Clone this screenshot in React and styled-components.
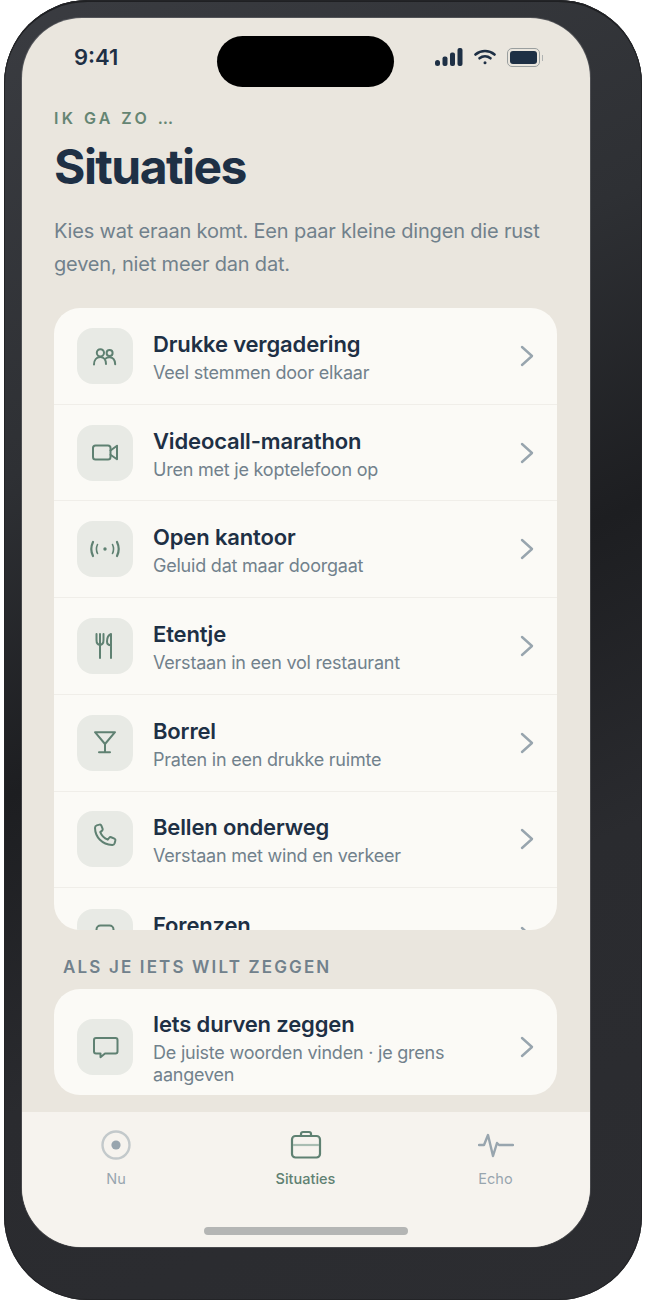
import styled, { createGlobalStyle } from "styled-components";

const GlobalStyle = createGlobalStyle`
  html, body {
    margin: 0;
    padding: 0;
    background: #fff;
    font-family: Inter, "Noto Sans", sans-serif;
  }
  * {
    box-sizing: border-box;
  }
`;

// icons are drawn 1:1 on the 56px tile
const Glyph = ({ width = 2, children }) => (
  <svg
    width="56"
    height="56"
    viewBox="0 0 56 56"
    fill="none"
    stroke="currentColor"
    strokeWidth={width}
    strokeLinecap="round"
    strokeLinejoin="round"
  >
    {children}
  </svg>
);

const PeopleIcon = () => (
  <Glyph>
    <circle cx="23.4" cy="24.8" r="3.6" />
    <circle cx="32.6" cy="25" r="3" />
    <path d="M17 36.5c0-4.4 2.6-7.5 6.3-7.5 3.4 0 5.7 2.8 5.7 7" />
    <path d="M28.4 30.7c1.2-1 2.8-1.5 4.4-1.4 3.2.2 5.2 3 5.4 6.9" />
  </Glyph>
);

const VideoIcon = () => (
  <Glyph>
    <rect x="16" y="20.5" width="17.5" height="14" rx="2.5" />
    <path d="M33.5 25.5l6.5-4.8v13.6l-6.5-4.5" />
  </Glyph>
);

const SoundIcon = () => (
  <Glyph>
    <circle cx="28" cy="28" r="1.7" fill="currentColor" stroke="none" />
    <path d="M16 21c-2.3 4.7-2.3 9.3 0 14" strokeWidth="2.2" />
    <path d="M20.5 23.5c-1.4 3-1.4 6 0 9" strokeWidth="1.6" />
    <path d="M35.5 23.5c1.4 3 1.4 6 0 9" strokeWidth="1.6" />
    <path d="M40 21c2.3 4.7 2.3 9.3 0 14" strokeWidth="2.2" />
  </Glyph>
);

const CutleryIcon = () => (
  <Glyph>
    <path d="M19.5 16v6c0 3 1.5 4.8 3.5 4.8s3.5-1.8 3.5-4.8v-6" />
    <path d="M23 16v24" />
    <path d="M34 40V16c-2.500 1-4 4-4 7.500 0 2.500 1.500 3.800 4 3.800" />
  </Glyph>
);

const GlassIcon = () => (
  <Glyph>
    <path d="M18 17.2h20L28 29 18 17.2z" />
    <path d="M28 29v8" />
    <path d="M22 37.3h11" />
  </Glyph>
);

const PhoneIcon = () => (
  <Glyph width={1.6}>
    <g transform="translate(12 10) scale(1.25)">
      <path d="M6.2 3.5l2.2-.6c.7-.2 1.2.1 1.5.8l1 2.6c.2.6.1 1-.4 1.4L9 8.9c1 2.6 3.3 4.9 6 6l1.2-1.5c.4-.5.9-.6 1.5-.4l2.6 1.1c.7.3 1 .8.8 1.5l-.6 2.2c-.3 1-1 1.5-2 1.4C10.5 18.6 5 13.1 4.8 5.5c0-1 .5-1.7 1.4-2z" />
    </g>
  </Glyph>
);

const TrainIcon = () => (
  <Glyph>
    <rect x="19.5" y="16.5" width="17" height="19" rx="4" />
    <path d="M19.5 26h17" />
  </Glyph>
);

const MessageIcon = () => (
  <Glyph>
    <path d="M19 19h19.5a2 2 0 0 1 2 2v11.5a2 2 0 0 1-2 2H28l-4.5 3.7v-3.7H19a2 2 0 0 1-2-2V21a2 2 0 0 1 2-2z" />
  </Glyph>
);

const Chevron = () => (
  <svg width="14" height="22" viewBox="0 0 14 22" fill="none">
    <path
      d="M2 2l10 9-10 9"
      stroke="currentColor"
      strokeWidth="2.4"
      strokeLinecap="round"
      strokeLinejoin="round"
    />
  </svg>
);

const situations = [
  { title: "Drukke vergadering", sub: "Veel stemmen door elkaar", icon: <PeopleIcon /> },
  { title: "Videocall-marathon", sub: "Uren met je koptelefoon op", icon: <VideoIcon /> },
  { title: "Open kantoor", sub: "Geluid dat maar doorgaat", icon: <SoundIcon /> },
  { title: "Etentje", sub: "Verstaan in een vol restaurant", icon: <CutleryIcon /> },
  { title: "Borrel", sub: "Praten in een drukke ruimte", icon: <GlassIcon /> },
  { title: "Bellen onderweg", sub: "Verstaan met wind en verkeer", icon: <PhoneIcon /> },
  { title: "Forenzen", sub: "", icon: <TrainIcon /> },
];

const Row = ({ title, sub, icon, divided }) => (
  <RowWrap $divided={divided}>
    <IconBox>{icon}</IconBox>
    <RowText>
      <RowTitle>{title}</RowTitle>
      <RowSub>{sub}</RowSub>
    </RowText>
    <ChevronSlot>
      <Chevron />
    </ChevronSlot>
  </RowWrap>
);

export default function App() {
  return (
    <>
      <GlobalStyle />
      <Phone>
        <Screen>
          <Island />
          <StatusBar>
            <Time>9:41</Time>
            <StatusIcons>
              <svg width="28" height="18" viewBox="0 0 28 18" fill="#1e3045">
                <rect x="0" y="12" width="5" height="6" rx="2.5" />
                <rect x="7.5" y="8.5" width="5" height="9.5" rx="2" />
                <rect x="15" y="4.5" width="5" height="13.5" rx="2" />
                <rect x="22.5" y="0" width="5" height="18" rx="2" />
              </svg>
              <svg width="22" height="16" viewBox="0 0 22 16" fill="none" stroke="#1e3045" strokeWidth="2.6" strokeLinecap="round">
                <path d="M1.5 5.5c5.5-4.6 13.5-4.6 19 0" />
                <path d="M5.5 9.3c3.3-2.6 7.7-2.6 11 0" />
                <circle cx="11" cy="13.8" r="1.5" fill="#1e3045" stroke="none" />
              </svg>
              <Battery>
                <BatteryFill />
              </Battery>
            </StatusIcons>
          </StatusBar>

          <Main>
            <Eyebrow>IK GA ZO …</Eyebrow>
            <Title>Situaties</Title>
            <Intro>Kies wat eraan komt. Een paar kleine dingen die rust geven, niet meer dan dat.</Intro>

            <ListCard>
              {situations.map((item, i) => (
                <Row key={item.title} {...item} divided={i < situations.length - 1} />
              ))}
            </ListCard>

            <SectionLabel>ALS JE IETS WILT ZEGGEN</SectionLabel>

            <SayCard>
              <IconBox>
                <MessageIcon />
              </IconBox>
              <RowText>
                <RowTitle>Iets durven zeggen</RowTitle>
                <RowSub>De juiste woorden vinden · je grens aangeven</RowSub>
              </RowText>
              <ChevronSlot>
                <Chevron />
              </ChevronSlot>
            </SayCard>
          </Main>

          <TabBar>
            <Tab>
              <TabIcon>
                <svg width="32" height="32" viewBox="0 0 32 32" fill="none">
                  <circle cx="16" cy="16" r="13.5" stroke="#c3c9cb" strokeWidth="2.4" />
                  <circle cx="16" cy="16" r="4.6" fill="#98a5ae" />
                </svg>
              </TabIcon>
              <TabLabel>Nu</TabLabel>
            </Tab>
            <Tab>
              <TabIcon>
                <svg width="32" height="32" viewBox="0 0 32 32" fill="none" stroke="#5f8172" strokeWidth="2.2" strokeLinejoin="round">
                  <rect x="2" y="7" width="28" height="21.5" rx="3.5" />
                  <path d="M11 7V5c0-1.3.8-2 2-2h6c1.2 0 2 .7 2 2v2" />
                  <path d="M3 16h26" stroke="#a9bdb2" />
                </svg>
              </TabIcon>
              <TabLabel $active>Situaties</TabLabel>
            </Tab>
            <Tab>
              <TabIcon>
                <svg width="36" height="32" viewBox="0 0 36 32" fill="none" stroke="#98a5ae" strokeWidth="2.4" strokeLinecap="round" strokeLinejoin="round">
                  <path d="M1 16h5l4-10 5 21 4-13 2 2h14" />
                </svg>
              </TabIcon>
              <TabLabel>Echo</TabLabel>
            </Tab>
            <HomeIndicator />
          </TabBar>
        </Screen>
      </Phone>
    </>
  );
}

const Phone = styled.div`
  width: 638px;
  height: 1300px;
  margin-left: 4px;
  padding: 18px 52px 53px 18px;
  border-radius: 84px;
  background: linear-gradient(155deg, #3a3c41 0%, #2e3034 30%, #1d1e21 50%, #2a2b2f 70%, #2c2d31 100%);
  box-shadow: inset 0 0 0 1px #232427, inset 0 2px 0 #1f2023;
`;

const Screen = styled.div`
  position: relative;
  width: 568px;
  height: 1229px;
  display: flex;
  flex-direction: column;
  border-radius: 60px;
  overflow: hidden;
  background: #eae6de;
  box-shadow: 0 0 0 1px rgba(255, 255, 255, 0.14);
`;

const Island = styled.div`
  position: absolute;
  top: 18px;
  left: 195px;
  width: 177px;
  height: 51px;
  border-radius: 26px;
  background: #000;
`;

const StatusBar = styled.div`
  flex: none;
  height: 90px;
  display: flex;
  align-items: flex-start;
  justify-content: space-between;
  padding: 26px 50px 0 52px;
`;

const Time = styled.span`
  font-size: 22px;
  line-height: 26px;
  font-weight: 600;
  color: #1e3045;
`;

const StatusIcons = styled.div`
  display: flex;
  align-items: center;
  gap: 11px;
  height: 26px;
`;

const Battery = styled.div`
  position: relative;
  width: 33px;
  height: 19px;
  padding: 2px;
  border: 1px solid #9a9f9f;
  border-radius: 5px;

  &::after {
    content: "";
    position: absolute;
    right: -4px;
    top: 6px;
    width: 1.5px;
    height: 6px;
    background: #b0b3b2;
  }
`;

const BatteryFill = styled.div`
  width: 100%;
  height: 100%;
  border-radius: 3px;
  background: #1e3045;
`;

const Main = styled.main`
  flex: 1;
  min-height: 0;
  padding: 0 33px 17px 32px;
  display: flex;
  flex-direction: column;
`;

const Eyebrow = styled.div`
  font-size: 16px;
  line-height: 20px;
  font-weight: 600;
  letter-spacing: 3.4px;
  color: #658573;
`;

const Title = styled.h1`
  margin: 10px 0 0;
  font-size: 48px;
  line-height: 58px;
  font-weight: 700;
  letter-spacing: -1.55px;
  color: #1e3045;
`;

const Intro = styled.p`
  margin: 19px 0 0;
  font-size: 20px;
  line-height: 33px;
  letter-spacing: -0.18px;
  color: #71818c;
`;

const ListCard = styled.section`
  flex: none;
  height: 622px;
  margin-top: 27px;
  border-radius: 26px;
  overflow: hidden;
  background: #fbfaf6;
`;

const RowWrap = styled.div`
  height: 96.72px;
  display: flex;
  align-items: center;
  gap: 20px;
  padding: 0 23px;
  border-bottom: ${(p) => (p.$divided ? "1px solid #f0eee9" : "none")};
`;

const IconBox = styled.div`
  flex: none;
  width: 56px;
  height: 56px;
  display: flex;
  border-radius: 16px;
  color: #5f8172;
  background: #e8eae5;
`;

const RowText = styled.div`
  flex: 1;
  min-width: 0;
  padding-top: 2px;
`;

const RowTitle = styled.div`
  font-size: 22px;
  line-height: 28px;
  font-weight: 600;
  letter-spacing: -0.15px;
  color: #1e3045;
`;

const RowSub = styled.div`
  min-height: 22px;
  margin-top: 4px;
  font-size: 18px;
  line-height: 22px;
  letter-spacing: -0.22px;
  color: #71818c;
`;

const ChevronSlot = styled.div`
  flex: none;
  display: flex;
  color: #98a5ae;
`;

const SectionLabel = styled.div`
  margin-top: 27px;
  padding-left: 9px;
  font-size: 17px;
  line-height: 20px;
  font-weight: 600;
  letter-spacing: 2.15px;
  color: #71818c;
`;

const SayCard = styled.section`
  flex: none;
  height: 106px;
  margin-top: 12px;
  display: flex;
  align-items: center;
  gap: 20px;
  padding: 10px 23px 0;
  border-radius: 26px;
  background: #fbfaf6;
`;

const TabBar = styled.nav`
  position: relative;
  flex: none;
  height: 135px;
  display: grid;
  grid-template-columns: 188px 191px 189px;
  padding-top: 17px;
  background: #f6f3ee;
`;

const Tab = styled.div`
  display: flex;
  flex-direction: column;
  align-items: center;
  gap: 9px;
`;

const TabIcon = styled.div`
  height: 32px;
  display: flex;
  align-items: center;
`;

const TabLabel = styled.span`
  font-size: 14.5px;
  line-height: 18px;
  font-weight: ${(p) => (p.$active ? 500 : 400)};
  color: ${(p) => (p.$active ? "#5f8172" : "#98a5ae")};
`;

const HomeIndicator = styled.div`
  position: absolute;
  bottom: 12px;
  left: 182px;
  width: 204px;
  height: 8px;
  border-radius: 4px;
  background: #b4b5b4;
`;
